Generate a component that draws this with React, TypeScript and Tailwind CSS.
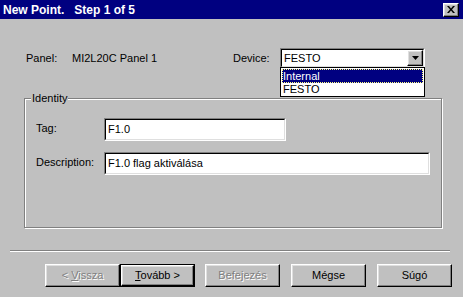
const raised =
  'border border-t-white border-l-white border-r-black border-b-black shadow-[inset_-1px_-1px_0_#808080,inset_1px_1px_0_#dfdfdf]';

function Win95Button({
  children,
  disabled,
  isDefault,
  className = '',
}: {
  children: React.ReactNode;
  disabled?: boolean;
  isDefault?: boolean;
  className?: string;
}) {
  const text = disabled ? 'text-[#808080] [text-shadow:1px_1px_0_#fff]' : 'text-black';
  if (isDefault) {
    return (
      <div className={`h-[23px] w-[75px] border border-black ${className}`}>
        <div className={`flex h-full w-full items-center justify-center bg-[#c0c0c0] ${raised} ${text}`}>
          {children}
        </div>
      </div>
    );
  }
  return (
    <div className={`flex h-[23px] w-[75px] items-center justify-center bg-[#c0c0c0] ${raised} ${text} ${className}`}>
      {children}
    </div>
  );
}

function Sunken({ children, className = '' }: { children?: React.ReactNode; className?: string }) {
  return (
    <div className={`border border-t-[#808080] border-l-[#808080] border-r-white border-b-white ${className}`}>
      <div className="flex h-full w-full items-center border border-t-black border-l-black border-r-[#dfdfdf] border-b-[#dfdfdf] bg-white pl-[2px]">
        {children}
      </div>
    </div>
  );
}

export default function App() {
  return (
    <div className="flex h-[297px] w-[463px] flex-col bg-[#c0c0c0] font-['Liberation_Sans',Arial,sans-serif] text-[11px] text-black">
      {/* title bar */}
      <div className="flex h-[19px] shrink-0 items-center justify-between bg-[#000080] pl-[3px] pr-[4px]">
        <span className="whitespace-pre text-[12px] font-bold text-white">New Point.   Step 1 of 5</span>
        <div className={`flex h-[14px] w-[16px] items-center justify-center bg-[#c0c0c0] ${raised}`}>
          <svg width="8" height="7" viewBox="0 0 8 7">
            <path d="M0 0h2l2 2.5L6 0h2L5 3.5 8 7H6L4 4.5 2 7H0l3-3.5z" fill="black" />
          </svg>
        </div>
      </div>

      {/* panel / device row */}
      <div className="mt-[29px] flex h-[20px] items-center pl-[26px]">
        <span className="w-[46px]">Panel:</span>
        <span className="w-[161px]">MI2L20C Panel 1</span>
        <span className="w-[47px]">Device:</span>
        <div className="relative h-[20px] w-[145px]">
          <Sunken className="h-[20px] w-[145px]">
            <span className="flex-1">FESTO</span>
            <div className={`flex h-[16px] w-[16px] items-center justify-center bg-[#c0c0c0] ${raised}`}>
              <svg width="7" height="4" viewBox="0 0 7 4">
                <path d="M0 0h7L3.5 4z" fill="black" />
              </svg>
            </div>
          </Sunken>
          <div className="absolute left-0 top-[19px] z-10 h-[30px] w-[145px] border border-black bg-white p-[1px]">
            <div className="flex h-[14px] items-center bg-[#000080] pl-[1px] text-white outline-1 outline-dotted outline-offset-[-1px] outline-[#ffff80]">
              Internal
            </div>
            <div className="flex h-[13px] items-center pl-[1px]">FESTO</div>
          </div>
        </div>
      </div>

      {/* identity group */}
      <div className="relative ml-[24px] mt-[30px] h-[130px] w-[418px] border border-[#808080] shadow-[inset_1px_1px_0_#fff,1px_1px_0_#fff]">
        <span className="absolute left-[6px] top-[-7px] bg-[#c0c0c0] px-[1px] leading-[13px]">Identity</span>
        <div className="flex flex-col pt-[19px]">
          <div className="flex items-center">
            <span className="mb-[3px] w-[79px] pl-[11px]">Tag:</span>
            <Sunken className="h-[23px] w-[182px]">F1.0</Sunken>
          </div>
          <div className="mt-[11px] flex items-center">
            <span className="mb-[3px] w-[79px] pl-[11px]">Description:</span>
            <Sunken className="h-[23px] w-[326px]">F1.0 flag aktiválása</Sunken>
          </div>
        </div>
      </div>

      {/* separator */}
      <div className="ml-[10px] mt-[22px] h-[2px] w-[440px] border-t border-b border-t-[#808080] border-b-white" />

      {/* buttons */}
      <div className="mt-[12px] flex pl-[45px]">
        <Win95Button disabled>
          <span className="whitespace-pre">
            {'< '}
            <span className="underline">V</span>issza
          </span>
        </Win95Button>
        <Win95Button isDefault>
          <span className="whitespace-pre">
            <span className="underline">T</span>
            {'ovább >'}
          </span>
        </Win95Button>
        <Win95Button disabled className="ml-[10px]">
          Befejezés
        </Win95Button>
        <Win95Button className="ml-[11px]">Mégse</Win95Button>
        <Win95Button className="ml-[11px]">Súgó</Win95Button>
      </div>
    </div>
  );
}
